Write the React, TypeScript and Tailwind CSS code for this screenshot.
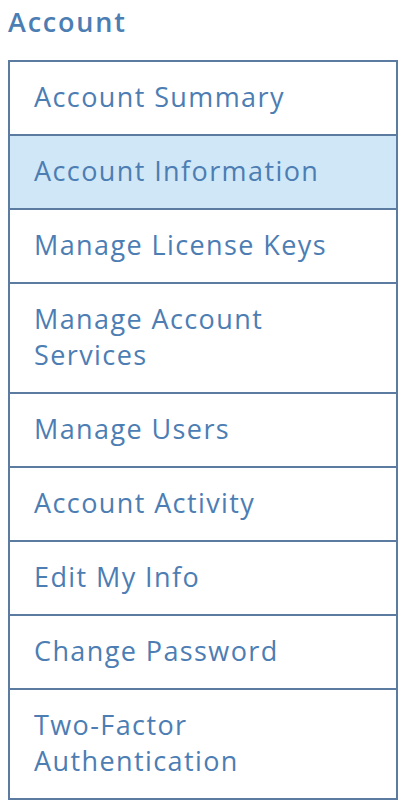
const items = [
  'Account Summary',
  'Account Information',
  'Manage License Keys',
  'Manage Account Services',
  'Manage Users',
  'Account Activity',
  'Edit My Info',
  'Change Password',
  'Two-Factor Authentication',
];

export default function App() {
  const active = 'Account Information';
  return (
    <div className="w-[404px] h-[810px] bg-white px-2 pt-[4px] font-['Open_Sans',sans-serif] text-[#4c7db3]">
      <h2 className="text-[27px] leading-[36px] font-semibold tracking-[1.8px] mb-5">Account</h2>
      <ul className="border-2 border-[#5b7ba1] w-[390px]">
        {items.map((item, i) => (
          <li
            key={item}
            className={`pl-6 pr-8 pt-[17px] pb-[19px] text-[27px] leading-[36px] tracking-[1.4px] ${i > 0 ? 'border-t-2 border-[#5b7ba1]' : ''} ${item === active ? 'bg-[#d0e7f7]' : ''}`}
          >
            {item}
          </li>
        ))}
      </ul>
    </div>
  );
}
